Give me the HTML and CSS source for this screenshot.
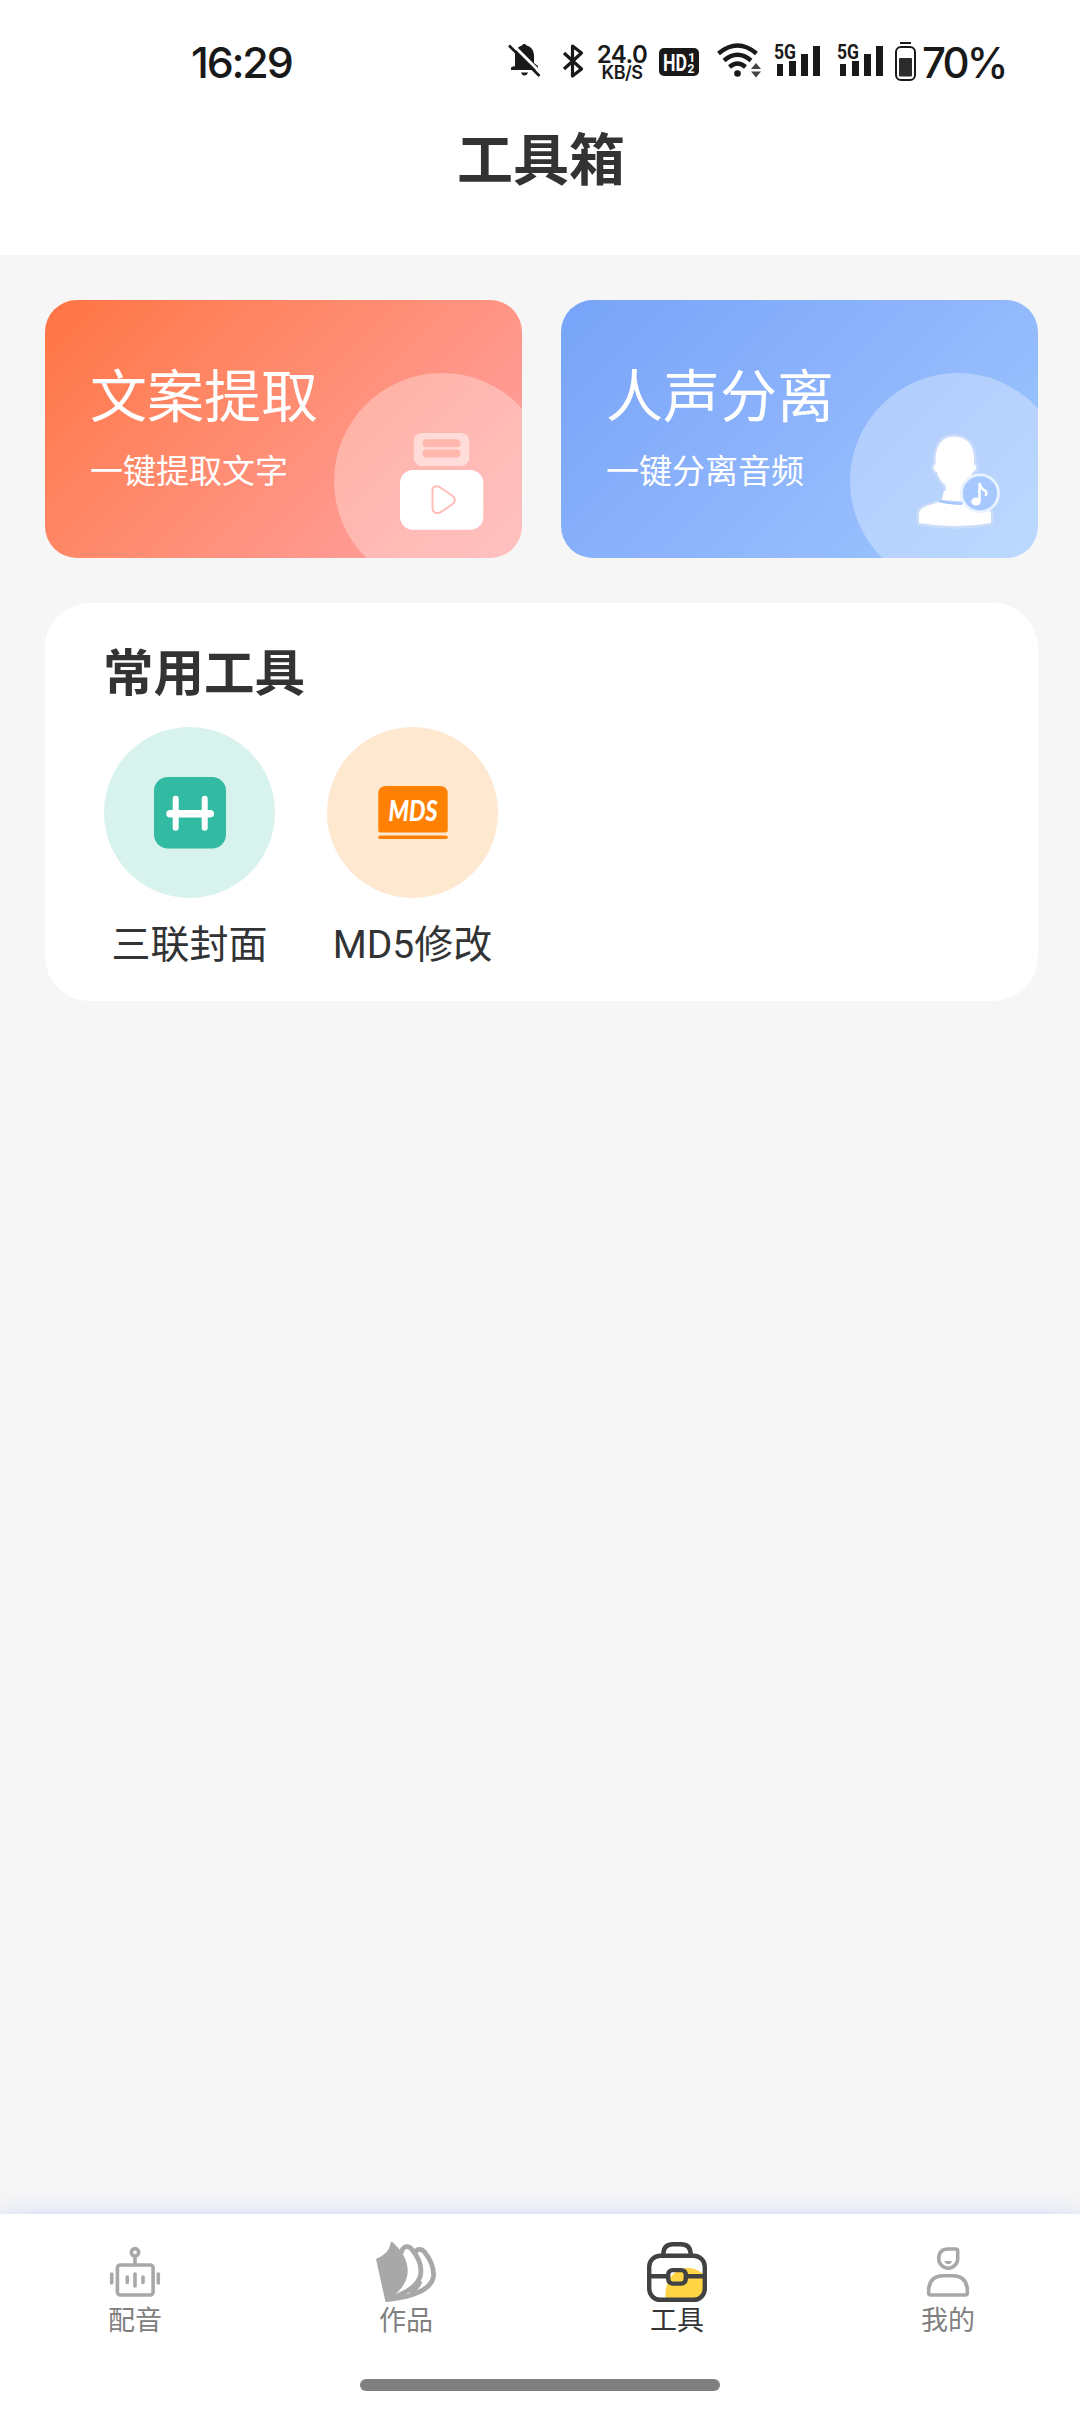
FILE: index.html
```html
<!DOCTYPE html>
<html lang="zh-CN">
<head>
<meta charset="utf-8">
<title>工具箱</title>
<link rel="stylesheet" href="styles.css">
</head>
<body>
<div class="app">
  <header class="header">
    <div class="status">
      <span class="time">16:29</span>
      <div class="status-icons">
        <svg class="bell" width="33" height="40" viewBox="0 0 33 40"><path d="M7 25V14C7 8 10 4.500 14 3.500C14.500 1.500 18 1.500 18.500 3.500C23 4.500 26 8 26 14V21L30 24V28H3V25.500Q5 24 7 24Z" fill="#191919"/><path d="M13 30.500H20Q19 33.500 16.500 33.500T13 30.500Z" fill="#191919"/><path d="M3 1L33 31" stroke="#fff" stroke-width="3"/><path d="M1 3.500L31.500 34" stroke="#191919" stroke-width="2.600"/></svg>
        <svg class="bluetooth" width="22" height="40" viewBox="0 0 22 40"><path d="M2 11L19.500 27L10.500 34V4L19.500 11L2 27" fill="none" stroke="#191919" stroke-width="3.200" stroke-linejoin="round"/></svg>
        <span class="speed"><b>24.0</b><i>KB/S</i></span>
        <svg class="hd" width="40" height="40" viewBox="0 0 40 40"><rect y="6" width="40" height="28" rx="5" fill="#191919"/><g fill="#fff" font-family="Roboto, sans-serif" font-weight="700"><text x="4" y="28.500" font-size="23" textLength="24" lengthAdjust="spacingAndGlyphs">HD</text><text x="29" y="19.500" font-size="13">1</text><text x="28.500" y="31" font-size="12">2</text></g></svg>
        <svg class="wifi" width="44" height="40" viewBox="0 0 44 40"><g fill="none" stroke="#191919" stroke-width="4.400"><path d="M1.500 11.500Q20.500 -4.500 39.500 11.500"/><path d="M7 18.500Q20.500 7 34 18.500"/><path d="M12.500 25Q20.500 18 28.500 25"/></g><circle cx="20.500" cy="31.500" r="3.300" fill="#191919"/><path d="M34 27L39 21L44 27ZM34 29.500L39 35.500L44 29.500Z" fill="#444"/></svg>
        <svg class="signal" width="47" height="40" viewBox="0 0 47 40"><text x="0" y="17" font-family="Roboto, sans-serif" font-weight="700" font-size="21" textLength="22" lengthAdjust="spacingAndGlyphs" fill="#191919">5G</text><path d="M3 22h6v12H3zM15 19h7v15h-7zM27 12h7v22h-7zM39 4h7v30h-7z" fill="#191919"/></svg>
        <svg class="signal" width="47" height="40" viewBox="0 0 47 40"><text x="0" y="17" font-family="Roboto, sans-serif" font-weight="700" font-size="21" textLength="22" lengthAdjust="spacingAndGlyphs" fill="#191919">5G</text><path d="M3 22h6v12H3zM15 19h7v15h-7zM27 12h7v22h-7zM39 4h7v30h-7z" fill="#191919"/></svg>
        <svg class="battery" width="21" height="40" viewBox="0 0 21 40"><path d="M5 1H16" stroke="#191919" stroke-width="2"/><rect x="1" y="5" width="19" height="33" rx="5" fill="none" stroke="#191919" stroke-width="2"/><rect x="4" y="16" width="13" height="18.500" rx="1" fill="#2b2b2b"/></svg>
        <span class="percent">70%</span>
      </div>
    </div>
    <h1 class="title">工具箱</h1>
  </header>

  <main class="content">
    <div class="cards">
      <section class="card card-text">
        <h2>文案提取</h2>
        <p>一键提取文字</p>
        <svg class="art" width="188" height="185" viewBox="0 0 188 185">
          <circle cx="108" cy="108" r="108" fill="#fff" fill-opacity=".31"/>
          <rect x="79.700" y="60" width="55.500" height="33" rx="8" fill="#fff" fill-opacity=".5"/>
          <path d="M92.500 70.200H122.500M92.500 80.600H122.500" stroke="#ffb7ae" stroke-width="8" stroke-linecap="round"/>
          <rect x="66" y="97" width="83.300" height="59.700" rx="13" fill="#fff"/>
          <path d="M98.500 117.500C98.500 113 102.500 112.500 105.500 114L118 122.500C122 125.500 122 128.500 118 131.500L107 139C102 141.500 98.500 139.500 98.500 135Z" fill="none" stroke="#ffbdb8" stroke-width="2"/>
        </svg>
      </section>
      <section class="card card-voice">
        <h2>人声分离</h2>
        <p>一键分离音频</p>
        <svg class="art" width="188" height="185" viewBox="0 0 188 185">
          <circle cx="108" cy="108" r="108" fill="#fff" fill-opacity=".31"/>
          <g stroke="#cbdcfa" stroke-width="5" stroke-linejoin="round" paint-order="stroke" fill="#fff">
            <path d="M85.700 91C85 73 91 63.700 104.500 63.700S125 73 124 91C128 93 126 98 122.500 99C121 106 117 109 115.500 113V127H92C96 123 96.500 119 95.500 112C90 108 88 103 87 99C83 98 82.500 93 85.700 91Z"/>
            <path d="M69 150V142C69 133 79 133 89 129C100 131.500 115 132 124 128L141 139V150Q105 156.500 69 150Z"/>
          </g>
          <path d="M94 118H116V128.500L92 127Z" fill="#fff"/>
          <path d="M89 127.800Q98 130.500 112 130.700" stroke="#a6c8ff" stroke-width="2.500" fill="none"/>
          <circle cx="130" cy="120.300" r="18.500" fill="#a6c8ff" stroke="#e9f2ff" stroke-width="2.800"/>
          <ellipse cx="126" cy="128.500" rx="4.700" ry="4" fill="#fff"/>
          <path d="M129.500 128V110Q131 116 135 117.500Q137.500 119.500 135.500 123" fill="none" stroke="#fff" stroke-width="2.500"/>
        </svg>
      </section>
    </div>

    <section class="panel">
      <h2>常用工具</h2>
      <div class="tools">
        <div class="tool">
          <svg width="171" height="171" viewBox="0 0 171 171"><circle cx="85.500" cy="85.500" r="85.500" fill="#d8f2ed"/><rect x="50" y="50" width="72" height="71.500" rx="14" fill="#32baa3"/><g stroke="#fff" stroke-linecap="round"><path d="M71.700 71.700V100.700M100.700 71.700V100.700" stroke-width="6"/><path d="M66 86.700H106.300" stroke-width="7.500"/></g></svg>
          <span>三联封面</span>
        </div>
        <div class="tool">
          <svg width="171" height="171" viewBox="0 0 171 171"><circle cx="85.500" cy="85.500" r="85.500" fill="#ffe8d0"/><path d="M51.300 67Q51.300 59 59.300 59H112.700Q120.700 59 120.700 67V103Q120.700 105.500 118.200 105.500H53.800Q51.300 105.500 51.300 103Z" fill="#ff8103"/><rect x="51.300" y="108.500" width="69.400" height="3.500" rx="1.700" fill="#ff8103"/><text x="61.500" y="93.500" font-family="Lato, sans-serif" font-weight="900" font-style="italic" font-size="28" textLength="49" lengthAdjust="spacingAndGlyphs" fill="#fff">MDS</text></svg>
          <span>MD5修改</span>
        </div>
      </div>
    </section>
  </main>

  <nav class="nav">
    <div class="tabs">
      <div class="tab">
        <svg width="60" height="60" viewBox="0 0 60 60" fill="none" stroke="#a8a8a8" stroke-width="3.600" stroke-linecap="round"><circle cx="30" cy="10.300" r="3.700"/><path d="M30 14.500V23"/><rect x="12.400" y="23" width="35.700" height="30" rx="3"/><path d="M6.700 32V41M53.300 32V41M22.300 35V40.500M30 32V44M38 35V40.500"/></svg>
        <span>配音</span>
      </div>
      <div class="tab">
        <svg width="60" height="60" viewBox="0 0 60 60"><path d="M0 17Q14 11 14.500 1Q16 -1 18 1.500C26 9 31.500 18 31.700 28C32 38 26 47 18.500 53L12 60H9.500Z" fill="#a8a8a8"/><g fill="none" stroke="#a8a8a8" stroke-width="4.800" stroke-linejoin="round"><path d="M25 11.500C26.500 4 32 2.500 36 7.500C43 16 46 25 44.500 33C42 44 31 50 17 55.500"/><path d="M38.500 11.500C40.500 6.500 45 6 48.500 10C55 18 58 26 57.500 34C56 48 34 56 11 57.500"/><path d="M44 39Q42 46 34 51"/></g></svg>
        <span>作品</span>
      </div>
      <div class="tab active">
        <svg width="60" height="60" viewBox="0 0 60 60"><path d="M19 58C16 40 27 26 41 26C50 26 54 31 58 33V50Q58 58 49 58Z" fill="#ffd546"/><g fill="none" stroke="#414242" stroke-width="4.400"><rect x="2.200" y="13.800" width="55.600" height="44" rx="11"/><path d="M16.400 14V11Q17 2.200 26 2.200H34Q43 2.200 43.600 11V14"/><path d="M2 34.300H20M40 34.300H58"/><rect x="21.200" y="28.100" width="17.600" height="13.500" rx="4.500"/></g></svg>
        <span>工具</span>
      </div>
      <div class="tab">
        <svg width="60" height="60" viewBox="0 0 60 60"><g fill="none" stroke="#a8a8a8" stroke-width="3.600" stroke-linejoin="round"><path d="M30 7H37.500Q39.700 7 39.700 9.200V16.500A9.500 9.700 0 0 1 20.700 16.500Q21 7 30 7Z"/><path d="M10.700 51V47Q12 33.700 25 33.700H35Q48 33.700 49.300 47V51Q49.300 53 47.300 53H12.700Q10.700 53 10.700 51Z"/></g><path d="M26.500 19H34Q33 22.300 30.300 22.300T26.500 19Z" fill="#a8a8a8"/></svg>
        <span>我的</span>
      </div>
    </div>
    <div class="home-bar"></div>
  </nav>
</div>
</body>
</html>
```
FILE: styles.css
```css
* { box-sizing: border-box; }

body {
  margin: 0;
  background: #f6f6f6;
  color: #323334;
  font-family: Roboto, "Noto Sans CJK SC", sans-serif;
}

h1, h2, p { margin: 0; }
svg { display: block; flex: none; overflow: visible; }

.app {
  display: flex;
  flex-direction: column;
  height: 2412px;
  overflow: hidden;
}

/* Header */
.header {
  height: 255px;
  background: #fff;
}

.status {
  display: flex;
  align-items: center;
  justify-content: space-between;
  height: 124px;
  padding: 0 76px 0 191px;
  color: #191919;
  font-family: Inter, sans-serif;
}

.time {
  font-size: 43px;
  font-weight: 500;
  letter-spacing: -2.200px;
}

.status-icons {
  display: flex;
  align-items: center;
}

.bluetooth { margin-left: 21px; }

.speed {
  display: flex;
  flex-direction: column;
  align-items: center;
  width: 54px;
  margin: 2px 10px 0 11px;
}

.speed b {
  font-size: 24px;
  font-weight: 600;
  letter-spacing: -.500px;
  line-height: 19px;
}

.speed i {
  font-size: 18px;
  font-style: normal;
  font-weight: 600;
  letter-spacing: -.500px;
  line-height: 18px;
}

.wifi { margin-left: 18px; }
.signal { margin-left: 13px; }
.signal + .signal { margin-left: 16px; }
.battery { margin-left: 11px; }

.percent {
  width: 82px;
  margin-left: 6px;
  font-size: 42px;
  font-weight: 500;
  letter-spacing: -2.800px;
  white-space: nowrap;
}

.title {
  padding: 1px 0 0 2px;
  font-size: 56px;
  font-weight: 700;
  line-height: 72px;
  text-align: center;
}

/* Content */
.content {
  flex: 1;
  padding: 45px 42px 0 45px;
}

.cards {
  display: grid;
  grid-template-columns: 1fr 1fr;
  gap: 39px;
}

.card {
  position: relative;
  height: 258px;
  padding: 62px 45px 0;
  border-radius: 32px;
  overflow: hidden;
  color: #fff;
}

.card-text { background: linear-gradient(135deg, #ff7443 0%, #ff8766 35%, #ff9a92 76%, #ffa5a6 100%); }
.card-voice { background: linear-gradient(135deg, #77a4f8 0%, #8bb2fb 45%, #9ec8ff 100%); }

.card h2 {
  font-size: 57px;
  font-weight: 400;
  line-height: 72px;
}

.card p {
  margin-top: 14px;
  font-size: 33px;
  line-height: 48px;
}

.art {
  position: absolute;
  right: 0;
  bottom: 0;
}

.panel {
  height: 398px;
  margin-top: 45px;
  padding: 39px 59px 0;
  border-radius: 45px;
  background: #fff;
}

.panel h2 {
  font-size: 50.500px;
  font-weight: 700;
  line-height: 64px;
  margin-left: -1px;
}

.tools {
  display: flex;
  gap: 52px;
  margin-top: 21px;
}

.tool {
  display: flex;
  flex-direction: column;
  align-items: center;
  width: 171px;
}

.tool span {
  margin-top: 22px;
  font-size: 39px;
  line-height: 50px;
  white-space: nowrap;
}

/* Bottom navigation */
.nav {
  height: 198px;
  padding-top: 28px;
  background: #fff;
  box-shadow: 0 0 24px #d2d9f6;
}

.tabs {
  display: flex;
  margin-left: -.5px;
}

.tab {
  display: flex;
  flex: 0 0 271px;
  flex-direction: column;
  align-items: center;
  color: #808080;
}

.tab span {
  padding-top: 1px;
  font-size: 27px;
  font-weight: 400;
  line-height: 36px;
}

.tab.active { color: #323334; }

.home-bar {
  width: 360px;
  height: 12px;
  margin: 40px auto 0;
  border-radius: 6px;
  background: #808080;
}
```
